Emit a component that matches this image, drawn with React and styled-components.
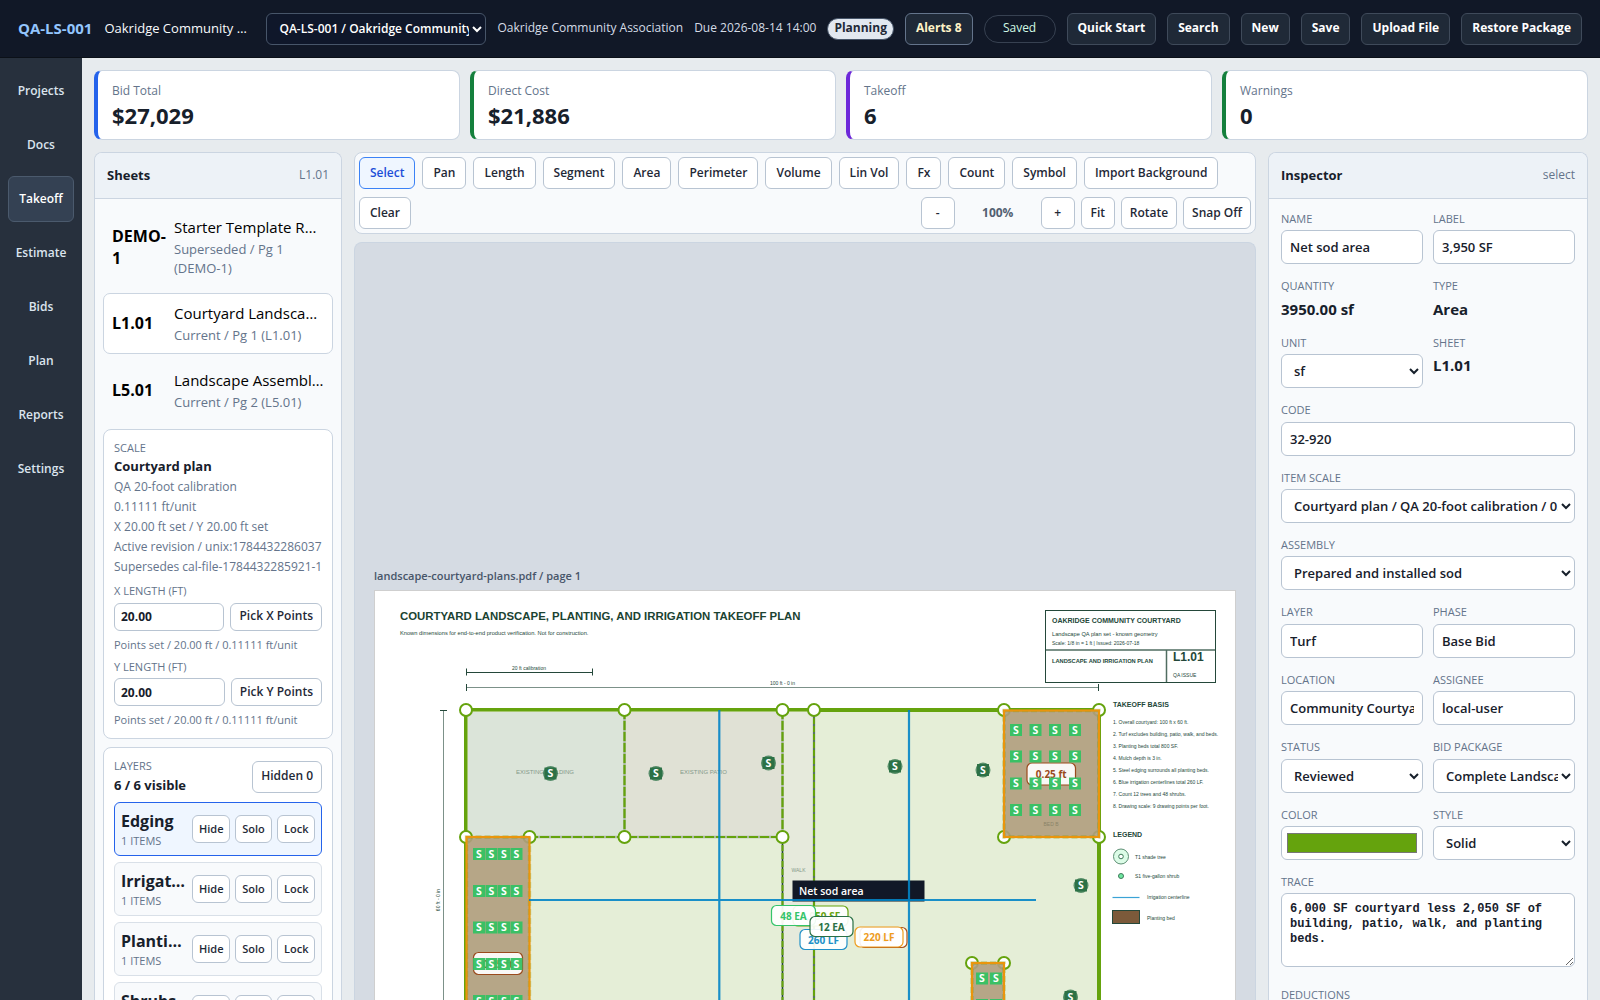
import React from "react";
import styled, { createGlobalStyle, css } from "styled-components";

const GlobalStyle = createGlobalStyle`
  *, *::before, *::after { box-sizing: border-box; }
  body {
    margin: 0;
    background: #e7ebee;
    color: #17202b;
    font-family: "Segoe UI", "Open Sans", "Noto Sans", sans-serif;
    font-size: 16px;
    line-height: 1.4;
  }
  button, input, select { font: inherit; }
`;

const Shell = styled.div`
  display: grid;
  grid-template: auto minmax(0, 1fr) / 82px minmax(0, 1fr);
  height: 100vh;
  overflow: hidden;
`;

/* ---------- top bar ---------- */

const TopBar = styled.header`
  grid-column: 1 / -1;
  display: flex;
  align-items: center;
  gap: 11px;
  height: 58px;
  padding: 0 18px;
  background: #111827;
  border-bottom: 1px solid #0b1018;
  color: #f8fafc;
  white-space: nowrap;
`;

const Brand = styled.div`
  display: flex;
  flex: 1;
  align-items: center;
  gap: 12px;
  min-width: 0;
`;

const Code = styled.strong`
  color: #93c5fd;
  font-size: 15px;
`;

const ProjectName = styled.span`
  flex: 1;
  max-width: 150px;
  font-size: 13px;
  overflow: hidden;
  text-overflow: ellipsis;
`;

const ProjectSelect = styled.select`
  width: 220px;
  height: 32px;
  padding: 0 0 0 8px;
  border: 1px solid #475569;
  border-radius: 6px;
  background: #0f172a;
  color: #fff;
  font-size: 12px;
  font-weight: 600;
`;

const Meta = styled.span`
  color: #d5dce6;
  font-size: 12px;
`;

const Pill = styled.span`
  display: flex;
  align-items: center;
  height: 22px;
  padding: 0 6px;
  border: 1px solid #475569;
  border-radius: 11px;
  background: #e2e8f0;
  color: #1f2937;
  font-size: 12px;
  font-weight: 700;
`;

const SavedPill = styled.span`
  display: flex;
  align-items: center;
  justify-content: center;
  width: 72px;
  height: 28px;
  border: 1px solid #374151;
  border-radius: 14px;
  color: #d1fae5;
  font-size: 12px;
`;

const BarButton = styled.button`
  height: 32px;
  padding: 0 10px;
  border: 1px solid ${(p) => (p.$alert ? "#64748b" : "#3f4a5a")};
  border-radius: 6px;
  background: #1f2937;
  color: ${(p) => (p.$alert ? "#fef3c7" : "#fff")};
  font-size: 12px;
  font-weight: 700;
`;

/* ---------- side navigation ---------- */

const SideNav = styled.nav`
  display: flex;
  flex-direction: column;
  gap: 8px;
  padding: 10px 8px;
  background: #27303d;
`;

const NavButton = styled.button`
  height: 46px;
  padding: 0;
  border: 1px solid ${(p) => (p.$active ? "#4b5a6d" : "transparent")};
  border-radius: 6px;
  background: ${(p) => (p.$active ? "#344153" : "transparent")};
  color: ${(p) => (p.$active ? "#fff" : "#dbe4ee")};
  font-size: 12px;
  font-weight: 600;
`;

/* ---------- content ---------- */

const Main = styled.main`
  display: flex;
  flex-direction: column;
  gap: 12px;
  min-width: 0;
  min-height: 0;
  padding: 12px 12px 0;
`;

const Kpis = styled.section`
  display: grid;
  grid-template-columns: repeat(4, minmax(0, 1fr));
  gap: 10px;
`;

const Kpi = styled.article`
  display: flex;
  flex-direction: column;
  justify-content: center;
  height: 70px;
  padding: 0 14px;
  border: 1px solid #cbd5e1;
  border-left: 4px solid ${(p) => p.$accent};
  border-radius: 8px;
  background: #fff;
`;

const KpiLabel = styled.span`
  color: #64748b;
  font-size: 12px;
  line-height: 20px;
`;

const KpiValue = styled.strong`
  font-size: 22px;
  line-height: 28px;
`;

const Workspace = styled.div`
  display: grid;
  grid-template-columns: 248px minmax(0, 1fr) 320px;
  flex: 1;
  gap: 12px;
  min-height: 0;
`;

const Panel = styled.section`
  min-width: 0;
  border: 1px solid #cbd5e1;
  border-radius: 8px 8px 0 0;
  border-bottom: 0;
  background: #f8fafc;
  overflow: hidden;
`;

const PanelHead = styled.header`
  display: flex;
  align-items: center;
  justify-content: space-between;
  height: 46px;
  padding: 0 12px;
  border-bottom: 1px solid #cbd5e1;
  background: #edf2f7;
`;

const PanelTitle = styled.h2`
  margin: 0;
  font-size: 13px;
  font-weight: 700;
`;

const Muted = styled.span`
  color: #64748b;
  font-size: 12px;
`;

/* ---------- sheets ---------- */

const SheetBody = styled.div`
  display: flex;
  flex-direction: column;
  gap: 8px;
  padding: 8px;
`;

const SheetList = styled.div`
  display: flex;
  flex-direction: column;
  gap: 6px;
`;

const SheetButton = styled.button`
  display: grid;
  grid-template-columns: 52px minmax(0, 1fr);
  align-items: center;
  gap: 10px;
  padding: 8px;
  border: 1px solid ${(p) => (p.$active ? "#cbd5e1" : "transparent")};
  border-radius: 7px;
  background: ${(p) => (p.$active ? "#fff" : "transparent")};
  color: #000;
  font-size: 16px;
  text-align: left;
`;

const SheetText = styled.span`
  display: flex;
  flex-direction: column;
  gap: 2px;
`;

const SheetTitle = styled.span`
  font-size: 15px;
  line-height: 22px;
  overflow: hidden;
  text-overflow: ellipsis;
  white-space: nowrap;
`;

const SheetSub = styled.span`
  color: #64748b;
  font-size: 13px;
  line-height: 19px;
`;

const Card = styled.div`
  display: flex;
  flex-direction: column;
  padding: 10px;
  border: 1px solid #cbd5e1;
  border-radius: 8px;
  background: #fff;
`;

const Caps = styled.span`
  color: #64748b;
  font-size: 11px;
  text-transform: uppercase;
`;

const CardTitle = styled.strong`
  font-size: 13px;
  line-height: 22px;
`;

const CardLine = styled.span`
  color: #64748b;
  font-size: 12px;
  line-height: 20px;
  white-space: nowrap;
`;

const AxisBlock = styled.div`
  display: flex;
  flex-direction: column;
  gap: 4px;
  padding-top: 6px;
`;

const AxisRow = styled.div`
  display: flex;
  gap: 6px;
`;

const controlBox = css`
  border: 1px solid #b8c4d2;
  border-radius: 6px;
  background: #fff;
  color: #17202b;
`;

const AxisInput = styled.input`
  ${controlBox}
  flex: 1;
  min-width: 0;
  height: 28px;
  padding: 0 6px;
  font-size: 12px;
  font-weight: 700;
`;

const AxisNote = styled.span`
  padding-top: 2px;
  color: #64748b;
  font-size: 11px;
  line-height: 16px;
  white-space: nowrap;
`;

const SmallButton = styled.button`
  ${controlBox}
  height: ${(p) => (p.$tall ? 32 : 28)}px;
  padding: 0 ${(p) => (p.$tight ? 6 : 8)}px;
  color: #1f2937;
  font-size: ${(p) => (p.$tight ? 11 : 12)}px;
  font-weight: 600;
  white-space: nowrap;
`;

const LayersHead = styled.div`
  display: flex;
  align-items: center;
  justify-content: space-between;
  padding: 0 0 6px;
`;

const Stack = styled.div`
  display: flex;
  flex-direction: column;
  min-width: 0;
`;

const LayerList = styled.div`
  display: flex;
  flex-direction: column;
  gap: 6px;
`;

const LayerRow = styled.div`
  display: grid;
  grid-template-columns: minmax(0, 1fr) 38px 37px 38px;
  align-items: center;
  gap: 5px;
  height: 54px;
  padding: 0 6px;
  border: 1px solid ${(p) => (p.$active ? "#2563eb" : "#d9e0e8")};
  border-radius: 6px;
  background: ${(p) => (p.$active ? "#eff6ff" : "#f8fafc")};
`;

const LayerName = styled.strong`
  font-size: 16px;
  line-height: 24px;
  overflow: hidden;
  text-overflow: ellipsis;
  white-space: nowrap;
`;

/* ---------- centre column ---------- */

const Center = styled.div`
  display: flex;
  flex-direction: column;
  gap: 8px;
  min-width: 0;
  min-height: 0;
`;

const Toolbar = styled.div`
  display: flex;
  flex-wrap: wrap;
  align-items: center;
  gap: 8px 7px;
  padding: 4px;
  border: 1px solid #cbd5e1;
  border-radius: 8px;
  background: #f8fafc;
`;

const ToolButton = styled.button`
  ${controlBox}
  height: 32px;
  padding: 0 10px;
  font-size: 12px;
  font-weight: 600;
  color: #1f2937;
  ${(p) => p.$active && css`
    border-color: #3b82f6;
    background: #eff6ff;
    color: #1d4ed8;
  `}
`;

const ZoomGroup = styled.div`
  display: flex;
  align-items: center;
  gap: 6px;
  margin-left: auto;
`;

const ZoomButton = styled(ToolButton)`
  min-width: 34px;
  padding: 0 8px;
`;

const ZoomValue = styled.span`
  width: 74px;
  color: #526071;
  font-size: 12px;
  font-weight: 700;
  text-align: center;
`;

const Canvas = styled.div`
  flex: 1;
  min-height: 0;
  padding: 324px 19px 0;
  border: 1px solid #cbd5e1;
  border-bottom: 0;
  border-radius: 8px 8px 0 0;
  background: #d5dbe3;
  overflow: hidden;
`;

const PageLabel = styled.div`
  height: 23px;
  color: #475569;
  font-size: 11px;
  font-weight: 600;
  line-height: 18px;
`;

const Sheet = styled.div`
  border: 1px solid #cfcfcf;
  background: #fff;
`;

const Plan = styled.svg`
  display: block;
  width: 100%;
  font-family: "Segoe UI", "Open Sans", sans-serif;
`;

/* ---------- inspector ---------- */

const Fields = styled.form`
  display: grid;
  grid-template-columns: repeat(2, minmax(0, 1fr));
  gap: 14px 10px;
  padding: 12px;
`;

const Field = styled.div`
  display: flex;
  flex-direction: column;
  gap: 4px;
  grid-column: ${(p) => (p.$wide ? "1 / -1" : "auto")};
`;

const FieldValue = styled.strong`
  font-size: 15px;
  line-height: 23px;
`;

const TextInput = styled.input`
  ${controlBox}
  width: 100%;
  height: 34px;
  padding: 0 8px;
  font-size: 13px;
  font-weight: 600;
`;

const ColorInput = styled(TextInput)`
  padding: 2px 3px;
`;

const SelectInput = styled.select`
  ${controlBox}
  width: 100%;
  height: 34px;
  padding: 0 0 0 8px;
  font-size: 13px;
  font-weight: 600;
`;

const TraceInput = styled.textarea`
  ${controlBox}
  width: 100%;
  height: 74px;
  margin-bottom: 6px;
  padding: 8px;
  font: 700 12px/15px Consolas, "Liberation Mono", monospace;
`;

/* ---------- data ---------- */

const navItems = ["Projects", "Docs", "Takeoff", "Estimate", "Bids", "Plan", "Reports", "Settings"];

const kpis = [
  ["Bid Total", "$27,029", "#2563eb"],
  ["Direct Cost", "$21,886", "#15803d"],
  ["Takeoff", "6", "#6d28d9"],
  ["Warnings", "0", "#15803d"],
];

const sheets = [
  ["DEMO-1", "Starter Template Reference", "Superseded / Pg 1 (DEMO-1)"],
  ["L1.01", "Courtyard Landscape Plan", "Current / Pg 1 (L1.01)"],
  ["L5.01", "Landscape Assemblies", "Current / Pg 2 (L5.01)"],
];

const tools = ["Select", "Pan", "Length", "Segment", "Area", "Perimeter", "Volume", "Lin Vol", "Fx", "Count", "Symbol", "Import Background", "Clear"];

const layers = ["Edging", "Irrigation", "Planting", "Shrubs", "Trees", "Turf"];

const fields = [
  { label: "Name", value: "Net sod area" },
  { label: "Label", value: "3,950 SF" },
  { label: "Quantity", value: "3950.00 sf", kind: "text" },
  { label: "Type", value: "Area", kind: "text" },
  { label: "Unit", value: "sf", kind: "select" },
  { label: "Sheet", value: "L1.01", kind: "text" },
  { label: "Code", value: "32-920", wide: true },
  { label: "Item Scale", value: "Courtyard plan / QA 20-foot calibration / 0.11111 ft/unit", kind: "select", wide: true },
  { label: "Assembly", value: "Prepared and installed sod", kind: "select", wide: true },
  { label: "Layer", value: "Turf" },
  { label: "Phase", value: "Base Bid" },
  { label: "Location", value: "Community Courtyard" },
  { label: "Assignee", value: "local-user" },
  { label: "Status", value: "Reviewed", kind: "select" },
  { label: "Bid Package", value: "Complete Landscape", kind: "select" },
  { label: "Color", value: "#65a30d", kind: "color" },
  { label: "Style", value: "Solid", kind: "select" },
  { label: "Trace", value: "6,000 SF courtyard less 2,050 SF of building, patio, walk, and planting beds.", kind: "area", wide: true },
  { label: "Deductions", value: "2,050 SF", wide: true },
];

/* ---------- plan drawing ---------- */

const INK = "#24483a";
const GREEN = "#65a30d";

const vertices = [
  [466, 710], [624.5, 710], [782.5, 710], [814, 710], [1004, 710], [1099, 710],
  [466, 837], [529.5, 837], [624.5, 837], [782.5, 837], [1004, 837], [1099, 837],
  [972, 963], [1004, 963],
];
const trees = [[550.5, 773.5], [656, 773.5], [768.5, 763], [895, 766.5], [983, 770], [1081, 885.5], [1070.5, 997]];
const shrubs = [];
[854, 891, 927.5, 964, 1001].forEach((y) => [479, 491.5, 504, 516.5].forEach((x) => shrubs.push([x, y])));
[730, 756.5, 783.5, 810].forEach((y) => [1016, 1035.5, 1055, 1075].forEach((x) => shrubs.push([x, y])));
[978.5, 1005].forEach((y) => [982, 996].forEach((x) => shrubs.push([x, y])));

const basis = [
  "1. Overall courtyard: 100 ft x 60 ft.",
  "2. Turf excludes building, patio, walk, and beds.",
  "3. Planting beds total 800 SF.",
  "4. Mulch depth is 3 in.",
  "5. Steel edging surrounds all planting beds.",
  "6. Blue irrigation centerlines total 260 LF.",
  "7. Count 12 trees and 48 shrubs.",
  "8. Drawing scale: 9 drawing points per foot.",
];

function Note({ x, y, size = 5, bold, anchor, color = INK, children, ...rest }) {
  return (
    <text x={x} y={y} fontFamily="Arial, 'Liberation Sans', sans-serif" fontSize={size}
      fontWeight={bold ? 700 : 400} textAnchor={anchor} fill={color} {...rest}>{children}</text>
  );
}

function Chip({ x, y, w, h = 20, color, children }) {
  return (
    <g>
      <rect x={x} y={y} width={w} height={h} rx="5" fill="#fff" fillOpacity="0.92" stroke={color} strokeWidth="1.2" />
      <text x={x + w / 2} y={y + h / 2 + 4} fontSize="10" fontWeight="700" textAnchor="middle" fill={color}>{children}</text>
    </g>
  );
}

function Bed({ x, y, w, h }) {
  return (
    <g>
      <rect x={x} y={y} width={w} height={h} fill="#b09d7e" fillOpacity="0.9" />
      <rect x={x} y={y} width={w} height={h} fill="none" stroke={GREEN} strokeWidth="3.4" strokeDasharray="6 3" opacity="0.3" />
      <rect x={x} y={y} width={w} height={h} fill="none" stroke="#ea950c" strokeWidth="2.2" />
    </g>
  );
}

function Marker({ x, y, color, round }) {
  return (
    <g>
      {round && <circle cx={x} cy={y} r="7.5" fill={color} fillOpacity="0.75" />}
      <rect x={x - 6} y={y - 6} width="12" height="12" fill={color} fillOpacity="0.95" />
      <text x={x} y={y + 3.7} fontSize="10.5" fontWeight="700" textAnchor="middle" fill="#fff">S</text>
    </g>
  );
}

function PlanDrawing() {
  return (
    <Plan viewBox="375 591 860 640" role="img" aria-label="Courtyard takeoff plan">
      <Note x="400" y="620" size="11.4" bold color="#1b4332">COURTYARD LANDSCAPE, PLANTING, AND IRRIGATION TAKEOFF PLAN</Note>
      <Note x="400" y="634.5" size="5.7">Known dimensions for end-to-end product verification. Not for construction.</Note>

      <g stroke={INK} fill="none">
        <path d="M466.5 668.5v7M466 672.5h127M592.5 668.5v7" />
        <path d="M466.5 684v7M1098.5 684v7" />
        <path d="M466 687.5h632M443.5 710v380" opacity="0.6" />
        <path d="M440 710.5h7" />
        <rect x="1045.5" y="610.5" width="170" height="72" />
        <path d="M1045 650h170M1166.5 650v32" strokeWidth="1.5" opacity="0.8" />
      </g>
      <Note x="529" y="670" anchor="middle">20 ft calibration</Note>
      <Note x="782.5" y="685" anchor="middle">100 ft - 0 in</Note>
      <Note x="440" y="900" anchor="middle" transform="rotate(-90 440 900)">60 ft - 0 in</Note>

      <Note x="1052" y="623" size="7" bold>OAKRIDGE COMMUNITY COURTYARD</Note>
      <Note x="1052" y="635.5" size="5.7">Landscape QA plan set - known geometry</Note>
      <Note x="1052" y="644.8">Scale: 1/8 in = 1 ft | Issued: 2026-07-18</Note>
      <Note x="1052" y="663" size="5.7" bold>LANDSCAPE AND IRRIGATION PLAN</Note>
      <Note x="1173" y="661" size="12" bold>L1.01</Note>
      <Note x="1173" y="677">QA ISSUE</Note>

      <rect x="466" y="710" width="633" height="380" fill="#e5eed7" />
      <rect x="466" y="710" width="158.5" height="127" fill="#dbe4d9" />
      <rect x="624.5" y="710" width="158" height="127" fill="#e0e1d5" />
      <rect x="782.5" y="710" width="31.5" height="380" fill="#e6eadc" />
      <g fill="none" stroke={GREEN}>
        <rect x="466" y="710" width="633" height="380" strokeWidth="4" />
        <path d="M466 711.5h348M467.5 711v126" stroke="#a5c66f" strokeWidth="1" />
        <g stroke="#a9b8a0" strokeWidth="2.5">
          <path d="M624.5 710v127M782.5 710v380M814 710v380M529 837h253.5" />
        </g>
        <path d="M624.5 710v127M782.5 710v127M529 837h253.5" strokeWidth="2.2" strokeDasharray="9 2" />
        <path d="M782.5 837v253M814 710v380" stroke={INK} strokeWidth="1.2" />
        <path d="M782.5 837v253M814 710v380" strokeWidth="2" strokeDasharray="6 2" />
      </g>
      <Note x="545" y="774" size="6" anchor="middle" color="#84998a">EXISTING BUILDING</Note>
      <Note x="703.5" y="774" size="6" anchor="middle" color="#84998a">EXISTING PATIO</Note>
      <Note x="798.5" y="872" anchor="middle" color="#84998a">WALK</Note>

      {vertices.map(([x, y]) => (
        <circle key={`${x}-${y}`} cx={x} cy={y} r="6" fill="#fff" stroke={GREEN} strokeWidth="2" />
      ))}
      <Bed x={466.5} y={837} w={63} h={250} />
      <Bed x={1004} y={710.5} w={95} h={126.5} />
      <Bed x={972} y={963} w={32} h={100} />
      <Note x="1051" y="826" anchor="middle" color="#8a8468">BED B</Note>

      <rect x="792.5" y="880.5" width="132" height="21" fill="#111827" />
      <text x="799" y="895" fontSize="10.5" fontWeight="600" fill="#fff">Net sod area</text>
      <path d="M719.3 710v380M909 710v380M529 900h507" fill="none" stroke="#0284c7" strokeOpacity="0.9" strokeWidth="2.2" />

      <Chip x={793} y={906} w={55} color={GREEN}>3,950 SF</Chip>
      <Chip x={800} y={929.5} w={47} color="#2090c8">260 LF</Chip>
      <Chip x={860} y={927.5} w={47} color="#a8501f">7 CY</Chip>
      <Chip x={855} y={927} w={48} color="#ee9c1c">220 LF</Chip>
      <Chip x={771.5} y={905.5} w={44} color="#35c46a">48 EA</Chip>
      <Chip x={810} y={916.5} w={43} color="#2a7045">12 EA</Chip>
      <Chip x={473.5} y={952.5} w={49} h={22} color="#9a4a1c">0.25 ft</Chip>
      <Chip x={1027} y={763} w={48.5} h={22} color="#9a4a1c">0.25 ft</Chip>

      {trees.map(([x, y]) => <Marker key={`${x}-${y}`} x={x} y={y} color="#2a7045" round />)}
      {shrubs.map(([x, y]) => <Marker key={`${x}-${y}`} x={x} y={y} color="#35c163" />)}

      <Note x="1113" y="707" size="7" bold>TAKEOFF BASIS</Note>
      {basis.map((line, i) => (
        <Note key={line} x="1113" y={724 + i * 12}>{line}</Note>
      ))}
      <Note x="1113" y="837" size="7" bold>LEGEND</Note>
      <circle cx="1121" cy="856.5" r="7.5" fill="#dcfce7" stroke="#5d8f74" />
      <circle cx="1121" cy="856.5" r="2.3" fill="#fff" stroke="#3f7a5a" />
      <circle cx="1121" cy="876" r="2.5" fill="#6ee7a0" stroke="#3f7a5a" />
      <path d="M1112.5 897.5h27" stroke="#3ba3d6" strokeWidth="1.2" />
      <rect x="1112.5" y="910.5" width="27" height="13" fill="#7c5a3a" stroke={INK} />
      <Note x="1135" y="859">T1 shade tree</Note>
      <Note x="1135" y="878">S1 five-gallon shrub</Note>
      <Note x="1147" y="899">Irrigation centerline</Note>
      <Note x="1147" y="920">Planting bed</Note>
    </Plan>
  );
}

/* ---------- composition ---------- */

function InspectorField({ label, value, kind = "input", wide }) {
  const id = `field-${label.toLowerCase().replace(/ /g, "-")}`;
  return (
    <Field $wide={wide}>
      {kind === "text" ? <Caps>{label}</Caps> : <Caps as="label" htmlFor={id}>{label}</Caps>}
      {kind === "text" && <FieldValue>{value}</FieldValue>}
      {kind === "input" && <TextInput id={id} defaultValue={value} />}
      {kind === "color" && <ColorInput id={id} type="color" defaultValue={value} />}
      {kind === "select" && <SelectInput id={id}><option>{value}</option></SelectInput>}
      {kind === "area" && <TraceInput id={id} defaultValue={value} />}
    </Field>
  );
}

function Axis({ axis }) {
  return (
    <AxisBlock>
      <Caps as="label" htmlFor={`axis-${axis}`}>{axis} length (ft)</Caps>
      <AxisRow>
        <AxisInput id={`axis-${axis}`} defaultValue="20.00" />
        <SmallButton type="button">Pick {axis} Points</SmallButton>
      </AxisRow>
      <AxisNote>Points set / 20.00 ft / 0.11111 ft/unit</AxisNote>
    </AxisBlock>
  );
}

export default function App() {
  return (
    <>
      <GlobalStyle />
      <Shell>
        <TopBar>
          <Brand>
            <Code>QA-LS-001</Code>
            <ProjectName>Oakridge Community Courtyard</ProjectName>
          </Brand>
          <ProjectSelect aria-label="Project">
            <option>QA-LS-001 / Oakridge Community Courtyard</option>
          </ProjectSelect>
          <Meta>Oakridge Community Association</Meta>
          <Meta>Due 2026-08-14 14:00</Meta>
          <Pill>Planning</Pill>
          <BarButton $alert>Alerts 8</BarButton>
          <SavedPill>Saved</SavedPill>
          {["Quick Start", "Search", "New", "Save", "Upload File", "Restore Package"].map((t) => (
            <BarButton key={t}>{t}</BarButton>
          ))}
        </TopBar>

        <SideNav>
          {navItems.map((t) => (
            <NavButton key={t} $active={t === "Takeoff"}>{t}</NavButton>
          ))}
        </SideNav>

        <Main>
          <Kpis>
            {kpis.map(([label, value, accent]) => (
              <Kpi key={label} $accent={accent}>
                <KpiLabel>{label}</KpiLabel>
                <KpiValue>{value}</KpiValue>
              </Kpi>
            ))}
          </Kpis>

          <Workspace>
            <Panel>
              <PanelHead>
                <PanelTitle>Sheets</PanelTitle>
                <Muted>L1.01</Muted>
              </PanelHead>
              <SheetBody>
                <SheetList>
                  {sheets.map(([code, title, sub]) => (
                    <SheetButton key={code} $active={code === "L1.01"}>
                      <strong>{code}</strong>
                      <SheetText>
                        <SheetTitle>{title}</SheetTitle>
                        <SheetSub>{sub}</SheetSub>
                      </SheetText>
                    </SheetButton>
                  ))}
                </SheetList>
                <Card>
                  <Caps>Scale</Caps>
                  <CardTitle>Courtyard plan</CardTitle>
                  <CardLine>QA 20-foot calibration</CardLine>
                  <CardLine>0.11111 ft/unit</CardLine>
                  <CardLine>X 20.00 ft set / Y 20.00 ft set</CardLine>
                  <CardLine>Active revision / unix:1784432286037</CardLine>
                  <CardLine>Supersedes cal-file-1784432285921-1</CardLine>
                  <Axis axis="X" />
                  <Axis axis="Y" />
                </Card>
                <Card>
                  <LayersHead>
                    <Stack>
                      <Caps>Layers</Caps>
                      <CardTitle>6 / 6 visible</CardTitle>
                    </Stack>
                    <SmallButton $tall>Hidden 0</SmallButton>
                  </LayersHead>
                  <LayerList>
                    {layers.map((name) => (
                      <LayerRow key={name} $active={name === "Edging"}>
                        <Stack>
                          <LayerName>{name}</LayerName>
                          <Caps>1 items</Caps>
                        </Stack>
                        <SmallButton $tight>Hide</SmallButton>
                        <SmallButton $tight>Solo</SmallButton>
                        <SmallButton $tight>Lock</SmallButton>
                      </LayerRow>
                    ))}
                  </LayerList>
                </Card>
              </SheetBody>
            </Panel>

            <Center>
              <Toolbar>
                {tools.map((t) => (
                  <ToolButton key={t} $active={t === "Select"}>{t}</ToolButton>
                ))}
                <ZoomGroup>
                  <ZoomButton aria-label="Zoom out">-</ZoomButton>
                  <ZoomValue>100%</ZoomValue>
                  <ZoomButton aria-label="Zoom in">+</ZoomButton>
                  <ZoomButton>Fit</ZoomButton>
                  <ZoomButton>Rotate</ZoomButton>
                  <ZoomButton>Snap Off</ZoomButton>
                </ZoomGroup>
              </Toolbar>
              <Canvas>
                <PageLabel>landscape-courtyard-plans.pdf / page 1</PageLabel>
                <Sheet>
                  <PlanDrawing />
                </Sheet>
              </Canvas>
            </Center>

            <Panel>
              <PanelHead>
                <PanelTitle>Inspector</PanelTitle>
                <Muted>select</Muted>
              </PanelHead>
              <Fields>
                {fields.map((f) => (
                  <InspectorField key={f.label} {...f} />
                ))}
              </Fields>
            </Panel>
          </Workspace>
        </Main>
      </Shell>
    </>
  );
}
